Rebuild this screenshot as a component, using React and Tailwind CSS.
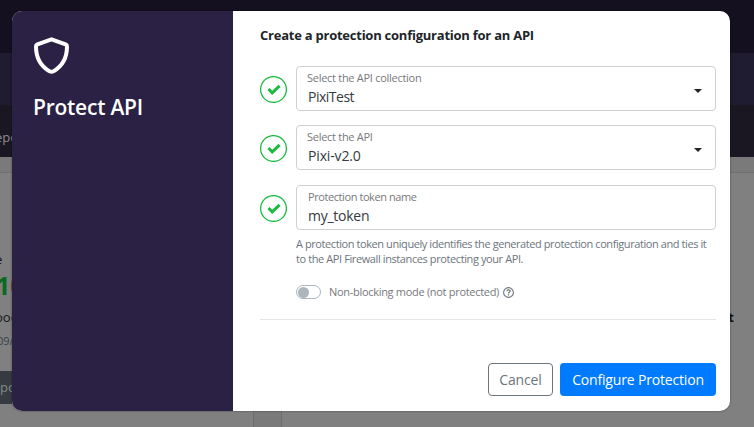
import React from "react";

const font = "font-['Open_Sans','Noto_Sans',sans-serif]";

function Check() {
  return (
    <svg className="mt-px h-[27px] w-[27px] shrink-0" viewBox="0 0 27 27" fill="none">
      <circle cx="13.5" cy="13.5" r="12.9" stroke="#1cbb40" strokeWidth="1.3" />
      <path d="M8.5 13 L12.2 16.8 L19.6 9.8" stroke="#1cbb40" strokeWidth="3" />
    </svg>
  );
}

function Field({ label, labelClass, value, valueClass, select }) {
  return (
    <div className="flex h-[45px] items-center">
      <Check />
      <div className="ml-[9px] flex h-[45px] w-[420px] items-center justify-between rounded border border-[#ced0d4] pl-[11px] pr-[13px]">
        <div className="flex flex-col whitespace-nowrap">
          <span className={"-mt-px h-[18px] text-[11px] leading-[17px] text-[#77797c] " + labelClass}>{label}</span>
          <span className={"h-[20px] text-[14px] leading-[20px] text-[#343a40] " + valueClass}>{value}</span>
        </div>
        {select && (
          <svg className="mt-[5px] h-1 w-2" viewBox="0 0 8 4"><path d="M0 0H8L4 4Z" fill="#212529" /></svg>
        )}
      </div>
    </div>
  );
}

export default function App() {
  return (
    <div className={"relative h-[427px] w-[754px] overflow-hidden bg-[#808080] " + font}>
      <div className="h-[53px] bg-[#141020]" />
      <div className="h-[52px] bg-[#1f1b30]" />
      <div className="flex h-[52px] items-center bg-[#1a1722]">
        <span className="-ml-[5px] mt-[13px] text-[13px] text-[#8b8990]">epo</span>
      </div>
      <div className="h-4 border-b border-[#6f6f6f] bg-[#7a7a7a]" />
      <div className="flex h-[254px]">
        <div className="flex w-[254px] flex-col overflow-hidden border-r border-[#6f6f6f] whitespace-nowrap">
          <span className="-ml-[5px] mt-[76px] h-[20px] text-[13px] leading-[20px] text-[#15171a]">e</span>
          <span className="-ml-[4px] -mt-px mb-[5px] h-[34px] text-[25px] leading-[34px] font-bold text-[#0b6b20]">1<span className="text-[#6b4420]">0</span></span>
          <span className="-ml-[5px] h-[20px] text-[13px] leading-[20px] text-[#15171a]">ood</span>
          <span className="-ml-[3px] mt-[5px] h-[18px] text-[11px] leading-[18px] text-[#35424e]">09/2</span>
          <span className="mt-[21px] h-[33px] w-20 bg-[#353b40] text-[13px] leading-[33px] text-[#888]">po</span>
        </div>
        <div className="w-7 border-r border-[#6f6f6f] bg-[#7a7a7a]" />
        <div className="flex flex-1 justify-end pr-[20px] pt-[135px] text-[13px] font-bold text-[#111]">t</div>
      </div>

      <div className="absolute left-3 top-[11px] flex h-[400px] w-[718px] overflow-hidden rounded-[10px] bg-white shadow-[0_0_2px_rgba(0,0,0,0.5)]">
        <div className="w-[221px] shrink-0 bg-[#2a2145] pl-[22px] pt-[26px] text-white">
          <svg className="h-[37px] w-[35px]" viewBox="0 0 35 37" fill="none">
            <path d="M17.5 2.3 L31.6 7.3 Q33 7.9 33 9.5 C33 20.5 28.5 29 19.5 34.3 Q17.5 35.3 15.5 34.3 C6.5 29 2 20.5 2 9.5 Q2 7.9 3.4 7.3 Z" stroke="white" strokeWidth="4" strokeLinejoin="round" />
          </svg>
          <h1 className="-ml-px mt-[17px] h-[32px] whitespace-nowrap text-[21px] font-semibold leading-[32px] tracking-[-0.25px]">Protect API</h1>
        </div>
        <div className="flex w-[497px] shrink-0 flex-col pl-[27px] pr-[14px] pt-[14px]">
          <h2 className="h-[20px] whitespace-nowrap text-[13px] font-bold leading-[20px] tracking-[-0.24px] text-[#212529]">Create a protection configuration for an API</h2>
          <div className="mt-[21px] flex flex-col gap-[14px]">
            <Field label="Select the API collection" labelClass="-ml-px tracking-[-0.28px]" value="PixiTest" valueClass="tracking-[-0.5px]" select />
            <Field label="Select the API" labelClass="-ml-px tracking-[-0.28px]" value="Pixi-v2.0" valueClass="tracking-[-0.15px]" select />
            <div className="mt-px"><Field label="Protection token name" labelClass="tracking-[-0.42px]" value="my_token" valueClass="tracking-[-0.25px]" /></div>
          </div>
          <div className="ml-[36px] mt-[6px] whitespace-nowrap text-[11px] leading-[15px] text-[#6c757d]">
            <p className="tracking-[-0.42px]">A protection token uniquely identifies the generated protection configuration and ties it</p>
            <p className="tracking-[-0.4px]">to the API Firewall instances protecting your API.</p>
          </div>
          <div className="ml-[36px] mt-[17px] flex h-[18px] items-center whitespace-nowrap text-[11px] text-[#77797c]">
            <span className="flex h-[14px] w-[25px] items-center rounded-full border border-[#adb5bd] pl-px"><span className="h-[11px] w-[11px] rounded-full bg-[#adb5bd]" /></span>
            <span className="ml-2 mt-px tracking-[-0.3px]">Non-blocking mode (not protected)</span>
            <svg className="ml-1 h-[11px] w-[11px]" viewBox="0 0 11 11" fill="none" stroke="#6c757d">
              <circle cx="5.5" cy="5.5" r="4.9" strokeWidth="1.1" />
              <path d="M3.9 4.3 C4 2.4 7.2 2.5 7.1 4.3 C7 5.3 5.5 5.3 5.5 6.6 M5.5 7.3 V8.5" strokeWidth="1.2" />
            </svg>
          </div>
          <div className="mt-[18px] h-px shrink-0 bg-[#e5e5e6]" />
          <div className="mt-[43px] flex justify-end gap-[7px] whitespace-nowrap text-[14px]">
            <button className="h-[33px] w-[65px] rounded border border-[#6c757d] tracking-[-0.15px] text-[#6c757d]">Cancel</button>
            <button className="h-[33px] w-[156px] rounded bg-[#007bff] font-medium tracking-[-0.17px] text-white">Configure Protection</button>
          </div>
        </div>
      </div>
    </div>
  );
}
